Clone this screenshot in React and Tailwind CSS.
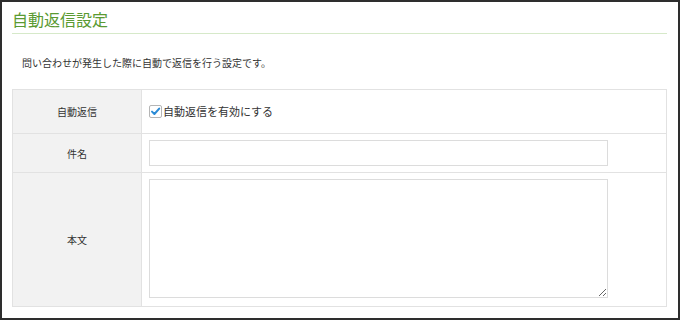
const font = { fontFamily: '"Noto Sans CJK JP", "Noto Sans", sans-serif' };

const CheckMark = () => (
  <span className="inline-flex h-[13px] w-[13px] items-center justify-center rounded-[2px] border border-[#b5b5b5] bg-white">
    <svg width="11" height="11" viewBox="0 0 11 11">
      <path d="M2 5.6 L4.4 8 L9.2 2.6" fill="none" stroke="#2b8bd6" strokeWidth="2" strokeLinecap="round" strokeLinejoin="round" />
    </svg>
  </span>
);

export default function App() {
  return (
    <div
      className="h-[320px] w-[680px] border-2 border-[#2e2e2e] bg-white text-[#333]"
      style={font}
    >
      <div className="ml-[10px] mr-[11px] border-b border-[#d6e9c9] pt-[7px] pb-[4px]">
        <h1 className="text-[16px] leading-[20px] text-[#5a9a32]">自動返信設定</h1>
      </div>

      <p className="mt-[22px] ml-[20px] text-[10px] leading-[14px]">
        問い合わせが発生した際に自動で返信を行う設定です。
      </p>

      <div className="ml-[10px] mt-[19px] w-[655px] border border-[#e2e2e2] text-[10px]">
        {/* 自動返信 */}
        <div className="flex h-[43px]">
          <div className="flex w-[129px] items-center justify-center border-r border-[#e2e2e2] bg-[#f2f2f2]">
            自動返信
          </div>
          <label className="flex items-center gap-[1px] pl-[7px] text-[11px]">
            <CheckMark />
            <span>自動返信を有効にする</span>
          </label>
        </div>

        {/* 件名 */}
        <div className="flex h-[39px] border-t border-[#e2e2e2]">
          <div className="flex w-[129px] items-center justify-center border-r border-[#e2e2e2] bg-[#f2f2f2]">
            件名
          </div>
          <div className="pl-[7px] pt-[6px]">
            <input className="h-[26px] w-[459px] border border-[#dcdcdc] bg-white outline-none" />
          </div>
        </div>

        {/* 本文 */}
        <div className="flex h-[134px] border-t border-[#e2e2e2]">
          <div className="flex w-[129px] items-center justify-center border-r border-[#e2e2e2] bg-[#f2f2f2]">
            本文
          </div>
          <div className="pl-[7px] pt-[6px]">
            <textarea className="block h-[119px] w-[459px] border border-[#dcdcdc] bg-white outline-none" />
          </div>
        </div>
      </div>
    </div>
  );
}
